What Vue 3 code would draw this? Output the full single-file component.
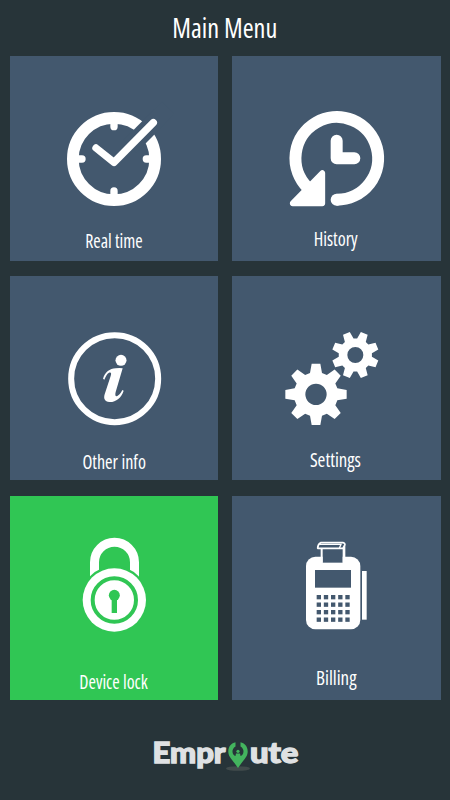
<script setup>
// each tile draws its icon and caption in the same 120px wide column
const tiles = [
  { id: 'realtime', label: 'Real time', x: 30.2, y: 28, width: 57.5 },
  { id: 'history', label: 'History', x: 39, y: 25.7, width: 44 },
  { id: 'info', label: 'Other info', x: 27.4, y: 29, width: 63.5 },
  { id: 'settings', label: 'Settings', x: 35.2, y: 26.7, width: 51 },
  { id: 'lock', label: 'Device lock', x: 24.3, y: 28.6, width: 68.5 },
  { id: 'billing', label: 'Billing', x: 41.3, y: 24.7, width: 40.5 },
];

const iconBox = (i) => `${i % 2 ? 6 : -3} ${i < 4 ? -30 : 0} 360 390`;
const labelBox = (i) => `${i % 2 ? 2.3 : -1} 0 120 40`;

// eight toothed wheel with a round hole
const gear = (cx, cy, outer, body, hole, tip, base, turn) => {
  const points = [];
  for (let i = 0; i < 8; i++) {
    const a = ((i * 45 + turn) * Math.PI) / 180;
    [[body, -base], [outer, -tip], [outer, tip], [body, base]].forEach(([r, t]) => {
      const px = cx + r * Math.cos(a) - t * Math.sin(a);
      const py = cy + r * Math.sin(a) + t * Math.cos(a);
      points.push(`${px.toFixed(1)} ${py.toFixed(1)}`);
    });
  }
  return `M${points.join('L')}Z M${cx - hole} ${cy}a${hole} ${hole} 0 1 0 ${hole * 2} 0a${hole} ${hole} 0 1 0 ${-hole * 2} 0Z`;
};

const bigGear = gear(123, 223, 92, 64, 32, 13, 18, 0);
const smallGear = gear(241, 105, 70, 48, 24, 11, 14, 22.5);
</script>

<template>
  <div class="screen">
    <header class="title">
      <svg width="120" height="40" viewBox="0 0 120 40">
        <text x="7.300" y="30" textLength="105" lengthAdjust="spacingAndGlyphs">Main Menu</text>
      </svg>
    </header>

    <main class="menu">
      <button v-for="(tile, i) in tiles" :key="tile.id" class="tile" :class="{ active: tile.id === 'lock' }">
        <svg class="icon" width="120" height="130" :viewBox="iconBox(i)">
          <g v-if="tile.id === 'realtime'" class="line">
            <circle cx="177" cy="177" r="123.5" stroke-width="35" />
            <path class="cut" d="M225 139L340 23" stroke-width="54" />
            <g stroke-width="22" stroke-linecap="round" stroke-linejoin="round">
              <path d="M177 62V80M177 292V273M62 177H81M292 177H274" />
              <path d="M123 144L177 187L295 68" />
            </g>
          </g>

          <g v-else-if="tile.id === 'history'">
            <path class="line" d="M185 299A124 124 0 1 0 98 263" stroke-width="36" />
            <circle cx="185" cy="299" r="18" />
            <path class="line" d="M185 122V175H238" stroke-width="36" stroke-linecap="round" stroke-linejoin="round" />
            <path d="M53 310L142 219V310Z" stroke="#fff" stroke-width="17" stroke-linejoin="round" />
          </g>

          <g v-else-if="tile.id === 'info'">
            <circle class="line" cx="179" cy="176" r="130.500" stroke-width="18" />
            <circle cx="198" cy="121" r="16.500" />
            <path d="M144 176C150 156 164 146 182 145Q194 143 203 145L182 216C179 228 183 232 190 226C195 222 199 216 202 210L206 212C199 234 182 247 163 246C149 245 145 236 149 223L167 168C170 159 168 156 162 158C156 161 152 169 148 179Z" />
          </g>

          <g v-else-if="tile.id === 'settings'" fill-rule="evenodd">
            <path :d="bigGear" />
            <path :d="smallGear" />
          </g>

          <g v-else-if="tile.id === 'lock'">
            <path class="line" d="M118.500 150V97a60 60 0 0 1 120 0V150" stroke-width="27" />
            <circle class="hole" cx="178" cy="210" r="102" />
            <circle cx="178" cy="210" r="95" />
            <circle class="line cut" cx="178" cy="210" r="65" stroke-width="12" />
            <circle class="hole" cx="178" cy="196" r="16.500" />
            <path class="hole" d="M170 200H186V249H170Z" />
          </g>

          <g v-else>
            <rect x="93" y="80" width="163" height="218" rx="28" />
            <rect x="261" y="123" width="14" height="146" />
            <rect class="hole" x="120" y="120" width="108" height="53" />
            <path class="hole" d="M143 50H203V98H143Z" />
            <path d="M137 55H143V98H137ZM203 42H211V98H203Z" />
            <path class="hole" d="M137 38H204Q211 39 209 45L204 55H128Q128 43 137 38Z" stroke="#fff" stroke-width="5" stroke-linejoin="round" />
            <path class="line" d="M134 43H198L193 55" stroke-width="4" />
            <template v-for="row in 4" :key="row">
              <rect v-for="col in 5" :key="col" class="hole" :x="103.500 + col * 21.500" :y="172.500 + row * 22.500" width="13" height="13" />
            </template>
          </g>
        </svg>

        <svg width="120" height="40" :viewBox="labelBox(i)">
          <text :x="tile.x" :y="tile.y" :textLength="tile.width" lengthAdjust="spacingAndGlyphs">{{ tile.label }}</text>
        </svg>
      </button>
    </main>

    <footer class="brand">
      <svg width="170" height="60" viewBox="0 0 170 60">
        <ellipse cx="98" cy="43.500" rx="12" ry="2.300" fill="#414b4c" />
        <text x="12.500" y="38.300" textLength="73" lengthAdjust="spacingAndGlyphs">Empr</text>
        <path class="pin" d="M98 17C92 17 88.300 21 88.300 26.500C88.300 32 92 34 98 43C104 34 107.700 32 107.700 26.500C107.700 21 104 17 98 17Z" />
        <path class="gap" d="M95.500 15H100.500V21.500C105 24 104 30 100.500 31L100 28.500H96L95.500 31C92 30 91 24 95.500 21.500Z" />
        <circle class="pin" cx="98" cy="26.300" r="1.600" />
        <text x="110" y="38.300" textLength="48.500" lengthAdjust="spacingAndGlyphs">ute</text>
      </svg>
    </footer>
  </div>
</template>

<style>
body {
  margin: 0;
  background: #273439;
}
</style>

<style scoped>
.screen {
  display: flex;
  flex-direction: column;
  width: 450px;
  height: 800px;
  overflow: hidden;
  background: #273439;
  font-family: "Open Sans", "Noto Sans", sans-serif;
}

svg {
  display: block;
  flex: none;
  fill: #fff;
}

.title {
  display: flex;
  justify-content: center;
  box-sizing: border-box;
  height: 56px;
  padding-top: 8px;
}

.title text {
  font-size: 26.500px;
  font-stretch: 75%;
}

.menu {
  display: grid;
  grid-template-columns: 208px 209px;
  grid-auto-rows: 204.500px;
  gap: 15.300px 14px;
  padding: 0 9px 0 10px;
}

.tile {
  --face: #43586e;
  display: flex;
  flex-direction: column;
  align-items: center;
  margin: 0;
  padding: 34px 0 0;
  border: 0;
  background: var(--face);
  font-family: inherit;
}

.tile.active {
  --face: #30c654;
}

.tile text {
  font-size: 19px;
  font-stretch: 75%;
}

.line {
  fill: none;
  stroke: #fff;
}

.cut {
  stroke: var(--face);
}

.hole {
  fill: var(--face);
}

.brand {
  display: flex;
  justify-content: center;
  padding-top: 25px;
}

.brand text {
  fill: #dfe1e3;
  stroke: #dfe1e3;
  stroke-width: 1.300;
  font-family: Lato, sans-serif;
  font-size: 28px;
  font-weight: 900;
}

.pin {
  fill: #43b45e;
}

.gap {
  fill: #273439;
}
</style>
